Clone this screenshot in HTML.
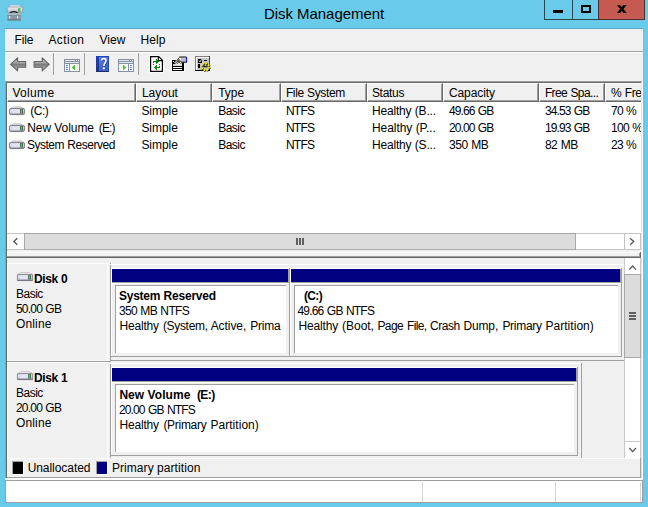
<!DOCTYPE html>
<html>
<head>
<meta charset="utf-8">
<title>Disk Management</title>
<style>
html,body{margin:0;padding:0;}
body{width:648px;height:507px;overflow:hidden;position:relative;background:#6ACAE9;font-family:"Liberation Sans",sans-serif;color:#000;}
.b{position:absolute;}
.t{position:absolute;white-space:pre;}
svg{position:absolute;overflow:visible;}
.hd{position:absolute;background:#F0F0F0;border-left:1px solid #fff;border-top:1px solid #fff;border-right:1px solid #696969;border-bottom:1px solid #696969;box-sizing:border-box;height:19px;}
.hd:after{content:"";position:absolute;right:0;bottom:0;left:0;top:0;border-right:1px solid #A0A0A0;border-bottom:1px solid #A0A0A0;}
.box{position:absolute;background:#fff;border:1px solid #A0A0A0;box-sizing:border-box;}
</style>
</head>
<body>
<!-- window frame inner line -->
<div class="b" style="left:4px;top:28px;width:640px;height:476px;background:#62C9EC;"></div>
<div class="b" style="left:5px;top:28px;width:638px;height:1px;background:#5CA8CC;"></div>
<!-- client -->
<div class="b" style="left:5px;top:29px;width:638px;height:474px;background:#F0F0F0;"></div>

<!-- caption buttons -->
<div class="b" style="left:544px;top:0;width:54px;height:20px;background:#29454F;"></div>
<div class="b" style="left:545px;top:0;width:27px;height:19px;background:#6ACAE9;"></div>
<div class="b" style="left:573px;top:0;width:25px;height:19px;background:#6ACAE9;"></div>
<div class="b" style="left:598px;top:0;width:47px;height:20px;background:#50302C;"></div>
<div class="b" style="left:599px;top:0;width:45px;height:19px;background:#C45A50;"></div>
<div class="b" style="left:553px;top:10px;width:10px;height:3px;background:#000;"></div>
<div class="b" style="left:581px;top:5px;width:10px;height:8px;border:2px solid #000;border-top-width:2px;box-sizing:border-box;"></div>
<svg style="left:616.8px;top:5px" width="9.6" height="8" viewBox="0 0 10 8" preserveAspectRatio="none"><path d="M0 0 L3.3 0 L5 2.3 L6.7 0 L10 0 L6.7 4 L10 8 L6.7 8 L5 5.7 L3.3 8 L0 8 L3.3 4 Z" fill="#000"/></svg>

<!-- title icon -->
<svg style="left:7px;top:5px" width="16" height="16" viewBox="0 0 16 16">
<defs>
<linearGradient id="gt1" x1="0" y1="0" x2="0" y2="1"><stop offset="0" stop-color="#ECECF0"/><stop offset="0.5" stop-color="#D4D4DE"/><stop offset="1" stop-color="#A9A9B6"/></linearGradient>
<linearGradient id="gt2" x1="0" y1="0" x2="0" y2="1"><stop offset="0" stop-color="#A9B8C0"/><stop offset="0.25" stop-color="#7F8E96"/><stop offset="0.55" stop-color="#8E9DA5"/><stop offset="1" stop-color="#66747C"/></linearGradient>
</defs>
<path d="M4 0.3 L12 0.3 L14.4 2.2 L1.6 2.2 Z" fill="#EDEDED" stroke="#B8BCC4" stroke-width="0.5"/>
<rect x="0.3" y="2" width="15.4" height="6" rx="1.6" fill="url(#gt1)" stroke="#8C8C9A" stroke-width="0.6"/>
<rect x="11.6" y="3" width="1.7" height="4.2" fill="#2ED62E"/>
<rect x="11.1" y="3.4" width="0.6" height="3.4" fill="#4C7A4C"/>
<path d="M2.8 7.9 Q6.8 5.2 10.8 7.9" fill="none" stroke="#1A1A1A" stroke-width="1.2"/>
<rect x="0.3" y="8.6" width="13.6" height="7" fill="url(#gt2)"/>
<rect x="0.3" y="8.6" width="13.6" height="1" fill="#B4C2CA"/>
<rect x="2.2" y="11" width="1" height="2.6" fill="#F4F4F4"/>
<rect x="10.2" y="11" width="1" height="2.6" fill="#F4F4F4"/>
</svg>

<!-- menu / toolbar separators -->
<div class="b" style="left:5px;top:51px;width:638px;height:1px;background:#A0A0A0;"></div>
<div class="b" style="left:5px;top:52px;width:638px;height:1px;background:#fff;"></div>

<!-- toolbar separators -->
<div class="b" style="left:53px;top:53px;width:1px;height:22px;background:#A0A0A0;"></div>
<div class="b" style="left:84px;top:53px;width:1px;height:22px;background:#A0A0A0;"></div>
<div class="b" style="left:138px;top:53px;width:1px;height:22px;background:#A0A0A0;"></div>

<!-- toolbar icons -->
<svg style="left:10px;top:57px" width="17" height="15" viewBox="0 0 17 15">
<defs><linearGradient id="ga" x1="0" y1="0" x2="0" y2="1"><stop offset="0" stop-color="#BCBCBC"/><stop offset="0.38" stop-color="#A6A6A6"/><stop offset="0.5" stop-color="#7A7A7A"/><stop offset="0.66" stop-color="#929292"/><stop offset="1" stop-color="#B8B8B8"/></linearGradient></defs>
<path d="M0.6 7.3 L7.6 0.8 L7.6 4.5 L15.7 4.5 L15.7 10.2 L7.6 10.2 L7.6 13.9 Z" fill="url(#ga)" stroke="#646464" stroke-width="1.1" stroke-linejoin="round"/>
</svg>
<svg style="left:33px;top:57px" width="17" height="15" viewBox="0 0 17 15">
<path d="M16.2 7.3 L9.2 0.8 L9.2 4.5 L1.1 4.5 L1.1 10.2 L9.2 10.2 L9.2 13.9 Z" fill="url(#ga)" stroke="#646464" stroke-width="1.1" stroke-linejoin="round"/>
</svg>
<!-- show/hide console tree -->
<svg style="left:64px;top:59px" width="16" height="13" viewBox="0 0 16 13" shape-rendering="crispEdges">
<rect x="0" y="0" width="16" height="13" fill="#8691A3"/>
<rect x="1" y="1" width="10" height="1" fill="#E4E8EE"/><rect x="12" y="1" width="1" height="1" fill="#fff"/><rect x="14" y="1" width="1" height="1" fill="#fff"/>
<rect x="1" y="3" width="14" height="1" fill="#E4E8EE"/>
<rect x="1" y="5" width="4" height="7" fill="#fff"/>
<rect x="6" y="5" width="9" height="7" fill="#fff"/><rect x="12" y="5" width="3" height="7" fill="#F2F2F2"/>
<rect x="2" y="6" width="2" height="1" fill="#4E86D2"/><rect x="2" y="8" width="2" height="1" fill="#4E86D2"/><rect x="2" y="10" width="2" height="1" fill="#4E86D2"/>
<path d="M11 5.6 L11 11.4 L7.7 8.5 Z" fill="#4BBE36" shape-rendering="auto"/>
</svg>
<!-- help -->
<svg style="left:96px;top:56px" width="13" height="16" viewBox="0 0 13 16">
<defs><linearGradient id="gh" x1="0" y1="0" x2="0.3" y2="1"><stop offset="0" stop-color="#5C82E0"/><stop offset="1" stop-color="#3C60CC"/></linearGradient>
<linearGradient id="gh2" x1="0" y1="0" x2="0" y2="1"><stop offset="0" stop-color="#1D40BC"/><stop offset="1" stop-color="#22357C"/></linearGradient></defs>
<rect x="0" y="0" width="13" height="16" fill="url(#gh)"/>
<rect x="0" y="0" width="3" height="16" fill="url(#gh2)"/>
<rect x="0" y="0" width="13" height="1" fill="#1E40BA"/>
<rect x="12" y="0" width="1" height="16" fill="#2648BC"/>
<rect x="0" y="15" width="13" height="1" fill="#1E2E70"/>
<path d="M5.6 4.6 C5.6 1.9 10.1 1.9 10.1 4.8 C10.1 6.9 7.9 7.2 7.9 10" stroke="#1C2C70" stroke-width="1.6" fill="none" transform="translate(0.6,0.6)"/>
<path d="M5.6 4.6 C5.6 1.9 10.1 1.9 10.1 4.8 C10.1 6.9 7.9 7.2 7.9 10" stroke="#fff" stroke-width="1.6" fill="none"/>
<rect x="7.3" y="11.8" width="2" height="2" fill="#1C2C70"/>
<rect x="6.9" y="11.4" width="2" height="2" fill="#fff"/>
</svg>
<!-- action pane -->
<svg style="left:118px;top:59px" width="16" height="13" viewBox="0 0 16 13" shape-rendering="crispEdges">
<rect x="0" y="0" width="16" height="13" fill="#8691A3"/>
<rect x="1" y="1" width="10" height="1" fill="#E4E8EE"/><rect x="12" y="1" width="1" height="1" fill="#fff"/><rect x="14" y="1" width="1" height="1" fill="#fff"/>
<rect x="1" y="3" width="14" height="1" fill="#E4E8EE"/>
<rect x="1" y="5" width="9" height="7" fill="#fff"/><rect x="1" y="5" width="3" height="7" fill="#F2F2F2"/>
<rect x="11" y="5" width="4" height="7" fill="#fff"/>
<rect x="12" y="6" width="2" height="1" fill="#4E86D2"/><rect x="12" y="8" width="2" height="1" fill="#4E86D2"/><rect x="12" y="10" width="2" height="1" fill="#4E86D2"/>
<path d="M5 5.6 L5 11.4 L8.3 8.5 Z" fill="#4BBE36" shape-rendering="auto"/>
</svg>
<!-- refresh -->
<svg style="left:150px;top:56px" width="13" height="16" viewBox="0 0 13 16">
<path d="M-0.6 -0.6 L9.2 -0.6 L13.6 3.8 L13.6 16.6 L-0.6 16.6 Z" fill="#fff"/>
<path d="M0.6 0.6 L8.7 0.6 L12.4 4.3 L12.4 15.4 L0.6 15.4 Z" fill="#fff" stroke="#000" stroke-width="1.2"/>
<path d="M8.3 0.8 L8.3 4.6 L12.2 4.6" fill="none" stroke="#000" stroke-width="1.1"/>
<g fill="#0A8A0A" shape-rendering="crispEdges">
<rect x="3" y="5" width="4" height="1"/><rect x="3" y="6" width="1" height="1"/><rect x="3" y="8" width="1" height="1"/>
<rect x="6" y="3" width="1" height="5"/><rect x="7" y="4" width="1" height="3"/><rect x="8" y="5" width="1" height="1"/>
<rect x="6" y="11" width="4" height="1"/><rect x="9" y="10" width="1" height="1"/><rect x="9" y="8" width="1" height="1"/>
<rect x="6" y="9" width="1" height="5"/><rect x="5" y="10" width="1" height="3"/><rect x="4" y="11" width="1" height="1"/>
</g>
</svg>
<!-- properties -->
<svg style="left:172px;top:56px" width="16" height="16" viewBox="0 0 16 16">
<rect x="-0.7" y="3.3" width="13.4" height="12.4" fill="#fff"/>
<rect x="0" y="4" width="12" height="11" fill="#000"/>
<rect x="1" y="5" width="1" height="1" fill="#fff"/>
<rect x="1" y="8" width="9" height="2" fill="#D4D4D4"/><rect x="1" y="11" width="9" height="1" fill="#fff"/><rect x="1" y="13" width="9" height="1" fill="#fff"/>
<path d="M2 6.8 L7 0.6 L14 0.6 L14 6.6 L10.6 6.6 L8.6 8.8 L5.4 8.8 Z" fill="#fff"/>
<path d="M2.6 6.6 L7.4 1.2 L9.2 1.2 L9.2 6 L7.6 8.2 L5.6 8.2 Z" fill="#E8E8E8"/>
<rect x="9" y="1.4" width="5" height="4.6" fill="#BEBEBE"/>
<path d="M7.2 1 L14 1 M9 6.2 L14 6.2" stroke="#000" stroke-width="1" fill="none"/>
<path d="M2.8 6.8 L7.4 1.4 M4 7.4 L7 3.8 M5.6 4.4 L8.6 7.6 M6.6 3.2 L9.2 6 M5.2 7.8 L7.8 4.8" stroke="#1A1A1A" stroke-width="0.8" fill="none"/>
<rect x="14.1" y="0.8" width="1" height="6" fill="#0000C8"/>
</svg>
<!-- wizard / settings -->
<svg style="left:195px;top:56px" width="17" height="16" viewBox="0 0 17 16">
<rect x="0" y="0" width="15" height="15" fill="#808080"/>
<rect x="1" y="1" width="14" height="14" fill="#fff"/>
<rect x="2" y="2" width="13" height="13" fill="#C4C4C4"/>
<rect x="14" y="0" width="1" height="15" fill="#404040"/>
<rect x="0" y="14" width="15" height="1" fill="#000"/>
<rect x="3" y="3" width="4" height="4" fill="#000"/><path d="M4 4.6 L5 5.8 L6.6 3.4" stroke="#fff" stroke-width="0.9" fill="none"/>
<rect x="9" y="4" width="3" height="1" fill="#000"/>
<rect x="3" y="8" width="2" height="4" fill="#000"/>
<path d="M9 7.4 L9 10.6 L12 10.6 L12 7.4" stroke="#202020" stroke-width="1.2" fill="none"/>
<circle cx="14.43" cy="12.33" r="1.1" fill="#000"/>
<circle cx="12.63" cy="14.40" r="1.1" fill="#000"/>
<circle cx="9.81" cy="14.64" r="1.1" fill="#000"/>
<circle cx="7.63" cy="12.93" r="1.1" fill="#000"/>
<circle cx="7.37" cy="10.27" r="1.1" fill="#000"/>
<circle cx="9.17" cy="8.20" r="1.1" fill="#000"/>
<circle cx="11.99" cy="7.96" r="1.1" fill="#000"/>
<circle cx="14.17" cy="9.67" r="1.1" fill="#000"/>
<circle cx="13.93" cy="11.83" r="1.05" fill="#F0F000"/>
<circle cx="12.13" cy="13.90" r="1.05" fill="#F0F000"/>
<circle cx="9.31" cy="14.14" r="1.05" fill="#F0F000"/>
<circle cx="7.13" cy="12.43" r="1.05" fill="#F0F000"/>
<circle cx="6.87" cy="9.77" r="1.05" fill="#F0F000"/>
<circle cx="8.67" cy="7.70" r="1.05" fill="#F0F000"/>
<circle cx="11.49" cy="7.46" r="1.05" fill="#F0F000"/>
<circle cx="13.67" cy="9.17" r="1.05" fill="#F0F000"/>
</svg>

<!-- ===== volume list ===== -->
<div class="b" style="left:5px;top:81px;width:638px;height:171px;background:#fff;"></div>
<div class="b" style="left:5px;top:81px;width:637px;height:1px;background:#A0A0A0;"></div>
<div class="b" style="left:5px;top:81px;width:1px;height:397px;background:#A0A0A0;"></div>
<div class="b" style="left:6px;top:82px;width:635px;height:1px;background:#696969;"></div>
<div class="b" style="left:6px;top:82px;width:1px;height:396px;background:#696969;"></div>
<div class="b" style="left:641px;top:82px;width:1px;height:169px;background:#E3E3E3;"></div>
<!-- header -->
<div class="b" style="left:7px;top:83px;width:634px;height:19px;overflow:hidden;">
<div class="hd" style="left:0px;top:0;width:129px;"></div>
<div class="hd" style="left:129px;top:0;width:76px;"></div>
<div class="hd" style="left:205px;top:0;width:69px;"></div>
<div class="hd" style="left:274px;top:0;width:86px;"></div>
<div class="hd" style="left:360px;top:0;width:76px;"></div>
<div class="hd" style="left:436px;top:0;width:96px;"></div>
<div class="hd" style="left:532px;top:0;width:66px;"></div>
<div class="hd" style="left:598px;top:0;width:60px;"></div>
</div>
<!-- drive icons -->
<svg width="0" height="0" style="left:0;top:0"><defs>
<linearGradient id="gd" x1="0" y1="0" x2="0" y2="1"><stop offset="0" stop-color="#C6C6D0"/><stop offset="0.45" stop-color="#E2E2EE"/><stop offset="1" stop-color="#9E9EAC"/></linearGradient>

</defs></svg>
<svg style="left:9px;top:106px" width="16" height="9" viewBox="0 0 16 9"><path d="M4.2 0.4 L11.8 0.4 L13.6 2.3 L2.4 2.3 Z" fill="#E8E8E8" stroke="#C4C4CA" stroke-width="0.5"/>
<rect x="0.4" y="2.3" width="15.2" height="6.3" rx="1.9" fill="url(#gd)" stroke="#6C6C76" stroke-width="0.9"/>
<rect x="2.6" y="3.5" width="8.4" height="3.4" fill="#E4E4F2"/>
<rect x="11.1" y="3.1" width="3" height="4.4" rx="0.6" fill="#4A4A56"/>
<rect x="11.8" y="3.3" width="1.5" height="4" fill="#30E030"/></svg>
<svg style="left:9px;top:123px" width="16" height="9" viewBox="0 0 16 9"><path d="M4.2 0.4 L11.8 0.4 L13.6 2.3 L2.4 2.3 Z" fill="#E8E8E8" stroke="#C4C4CA" stroke-width="0.5"/>
<rect x="0.4" y="2.3" width="15.2" height="6.3" rx="1.9" fill="url(#gd)" stroke="#6C6C76" stroke-width="0.9"/>
<rect x="2.6" y="3.5" width="8.4" height="3.4" fill="#E4E4F2"/>
<rect x="11.1" y="3.1" width="3" height="4.4" rx="0.6" fill="#4A4A56"/>
<rect x="11.8" y="3.3" width="1.5" height="4" fill="#30E030"/></svg>
<svg style="left:9px;top:140px" width="16" height="9" viewBox="0 0 16 9"><path d="M4.2 0.4 L11.8 0.4 L13.6 2.3 L2.4 2.3 Z" fill="#E8E8E8" stroke="#C4C4CA" stroke-width="0.5"/>
<rect x="0.4" y="2.3" width="15.2" height="6.3" rx="1.9" fill="url(#gd)" stroke="#6C6C76" stroke-width="0.9"/>
<rect x="2.6" y="3.5" width="8.4" height="3.4" fill="#E4E4F2"/>
<rect x="11.1" y="3.1" width="3" height="4.4" rx="0.6" fill="#4A4A56"/>
<rect x="11.8" y="3.3" width="1.5" height="4" fill="#30E030"/></svg>
<!-- list h-scrollbar -->
<div class="b" style="left:7px;top:233px;width:634px;height:17px;background:#fff;"></div>
<div class="b" style="left:7px;top:233px;width:634px;height:1px;background:#C4C4C4;"></div>
<div class="b" style="left:7px;top:249px;width:634px;height:1px;background:#C4C4C4;"></div>
<div class="b" style="left:24px;top:233px;width:552px;height:17px;background:#A9A9A9;"></div>
<div class="b" style="left:25px;top:234px;width:550px;height:15px;background:#DCDCDC;"></div>
<div class="b" style="left:624px;top:233px;width:1px;height:17px;background:#C4C4C4;"></div>
<div class="b" style="left:640px;top:233px;width:1px;height:17px;background:#C4C4C4;"></div>
<svg style="left:11px;top:237px" width="8" height="10" viewBox="0 0 8 10"><path d="M6.3 1.2 L2.8 4.5 L6.3 7.8" fill="none" stroke="#555" stroke-width="1.3"/></svg>
<svg style="left:628px;top:237px" width="8" height="10" viewBox="0 0 8 10"><path d="M2.2 1.2 L5.7 4.5 L2.2 7.8" fill="none" stroke="#555" stroke-width="1.3"/></svg>
<div class="b" style="left:296px;top:238px;width:2px;height:7px;background:#606060;"></div>
<div class="b" style="left:299px;top:238px;width:2px;height:7px;background:#606060;"></div>
<div class="b" style="left:302px;top:238px;width:2px;height:7px;background:#606060;"></div>

<!-- splitter -->
<div class="b" style="left:7px;top:250px;width:634px;height:8px;background:#F2F2F2;"></div>
<div class="b" style="left:7px;top:252px;width:633px;height:1px;background:#fff;"></div>
<div class="b" style="left:7px;top:252px;width:1px;height:5px;background:#fff;"></div>
<div class="b" style="left:639px;top:253px;width:1px;height:4px;background:#A0A0A0;"></div>
<div class="b" style="left:640px;top:252px;width:1px;height:6px;background:#696969;"></div>
<div class="b" style="left:641px;top:250px;width:2px;height:8px;background:#fff;"></div>

<!-- ===== lower pane ===== -->
<div class="b" style="left:5px;top:256px;width:638px;height:223px;background:#F0F0F0;"></div>
<div class="b" style="left:7px;top:256px;width:633px;height:1px;background:#A0A0A0;"></div>
<div class="b" style="left:5px;top:256px;width:1px;height:222px;background:#A0A0A0;"></div>
<div class="b" style="left:7px;top:257px;width:634px;height:1px;background:#696969;"></div>
<div class="b" style="left:6px;top:256px;width:1px;height:222px;background:#696969;"></div>
<div class="b" style="left:641px;top:258px;width:1px;height:220px;background:#E3E3E3;"></div>
<div class="b" style="left:640px;top:256px;width:1px;height:2px;background:#696969;"></div>
<div class="b" style="left:641px;top:256px;width:1px;height:2px;background:#fff;"></div>
<div class="b" style="left:642px;top:256px;width:1px;height:223px;background:#fff;"></div>
<div class="b" style="left:7px;top:477px;width:634px;height:1px;background:#A0A0A0;"></div>
<div class="b" style="left:5px;top:478px;width:638px;height:2px;background:#fff;"></div>

<!-- disk 0 label -->
<div class="b" style="left:7px;top:258px;width:1px;height:219px;background:#fff;"></div>
<div class="b" style="left:8px;top:360px;width:100px;height:1px;background:#F8F8F8;"></div>
<div class="b" style="left:7px;top:263px;width:101px;height:1px;background:#fff;"></div>
<div class="b" style="left:107px;top:263px;width:1px;height:98px;background:#fff;"></div>
<div class="b" style="left:110px;top:263px;width:1px;height:1px;background:#A0A0A0;"></div>
<div class="b" style="left:110px;top:265px;width:1px;height:96px;background:#A0A0A0;"></div>
<div class="b" style="left:7px;top:361px;width:104px;height:1px;background:#A0A0A0;"></div>
<svg style="left:17px;top:272px" width="16" height="9" viewBox="0 0 16 9"><path d="M3.6 0.5 L12.4 0.5 L14.4 2.4 L1.6 2.4 Z" fill="#F4F4F4" stroke="#BEBEC4" stroke-width="0.7"/>
<rect x="0.4" y="2.4" width="15.2" height="6.2" rx="0.5" fill="url(#gd)" stroke="#7A7A84" stroke-width="0.8"/>
<rect x="2.6" y="3.5" width="8.4" height="3.4" fill="#E6E6F4"/>
<rect x="11.1" y="3.1" width="3" height="4.4" rx="0.6" fill="#50505C"/>
<rect x="11.8" y="3.3" width="1.5" height="4" fill="#34E034"/>
<rect x="0.4" y="8" width="15.2" height="0.8" fill="#74747E"/></svg>
<!-- disk 0 partitions -->
<div class="b" style="left:111px;top:264px;width:513px;height:1px;background:#fff;"></div>
<div class="b" style="left:111px;top:268px;width:179px;height:89px;background:#A0A0A0;"></div>
<div class="b" style="left:111px;top:268px;width:178px;height:88px;background:#fff;"></div>
<div class="b" style="left:112px;top:269px;width:177px;height:14px;background:#A0A0A0;"></div>
<div class="b" style="left:112px;top:269px;width:176px;height:13px;background:#000080;"></div>
<div class="b" style="left:112px;top:284px;width:177px;height:72px;background:#F0F0F0;"></div>
<div class="b" style="left:115px;top:285px;width:171px;height:68px;background:#A0A0A0;"></div>
<div class="b" style="left:116px;top:286px;width:170px;height:67px;background:#fff;"></div>
<div class="b" style="left:290px;top:268px;width:332px;height:89px;background:#A0A0A0;"></div>
<div class="b" style="left:290px;top:268px;width:331px;height:88px;background:#fff;"></div>
<div class="b" style="left:291px;top:269px;width:330px;height:14px;background:#A0A0A0;"></div>
<div class="b" style="left:291px;top:269px;width:329px;height:13px;background:#000080;"></div>
<div class="b" style="left:291px;top:284px;width:330px;height:72px;background:#F0F0F0;"></div>
<div class="b" style="left:294px;top:285px;width:324px;height:68px;background:#A0A0A0;"></div>
<div class="b" style="left:295px;top:286px;width:323px;height:67px;background:#fff;"></div>
<div class="b" style="left:111px;top:360px;width:513px;height:1px;background:#A0A0A0;"></div>

<!-- disk 1 label -->
<div class="b" style="left:7px;top:362px;width:101px;height:1px;background:#fff;"></div>
<div class="b" style="left:107px;top:362px;width:1px;height:96px;background:#fff;"></div>
<div class="b" style="left:110px;top:364px;width:1px;height:94px;background:#A0A0A0;"></div>
<svg style="left:17px;top:371px" width="16" height="9" viewBox="0 0 16 9"><path d="M3.6 0.5 L12.4 0.5 L14.4 2.4 L1.6 2.4 Z" fill="#F4F4F4" stroke="#BEBEC4" stroke-width="0.7"/>
<rect x="0.4" y="2.4" width="15.2" height="6.2" rx="0.5" fill="url(#gd)" stroke="#7A7A84" stroke-width="0.8"/>
<rect x="2.6" y="3.5" width="8.4" height="3.4" fill="#E6E6F4"/>
<rect x="11.1" y="3.1" width="3" height="4.4" rx="0.6" fill="#50505C"/>
<rect x="11.8" y="3.3" width="1.5" height="4" fill="#34E034"/>
<rect x="0.4" y="8" width="15.2" height="0.8" fill="#74747E"/></svg>
<!-- disk 1 partitions -->
<div class="b" style="left:111px;top:363px;width:471px;height:1px;background:#fff;"></div>
<div class="b" style="left:111px;top:367px;width:467px;height:89px;background:#A0A0A0;"></div>
<div class="b" style="left:111px;top:367px;width:466px;height:88px;background:#fff;"></div>
<div class="b" style="left:112px;top:368px;width:465px;height:14px;background:#A0A0A0;"></div>
<div class="b" style="left:112px;top:368px;width:464px;height:13px;background:#000080;"></div>
<div class="b" style="left:112px;top:383px;width:465px;height:72px;background:#F0F0F0;"></div>
<div class="b" style="left:115px;top:384px;width:459px;height:68px;background:#A0A0A0;"></div>
<div class="b" style="left:116px;top:385px;width:458px;height:67px;background:#fff;"></div>
<div class="b" style="left:581px;top:363px;width:1px;height:95px;background:#A0A0A0;"></div>

<!-- v scrollbar -->
<div class="b" style="left:624px;top:258px;width:17px;height:200px;background:#C8C8C8;"></div>
<div class="b" style="left:625px;top:258px;width:15px;height:16px;background:#fff;"></div>
<div class="b" style="left:624px;top:274px;width:17px;height:84px;background:#A9A9A9;"></div>
<div class="b" style="left:625px;top:275px;width:15px;height:82px;background:#DCDCDC;"></div>
<div class="b" style="left:625px;top:358px;width:15px;height:83px;background:#fff;"></div>
<div class="b" style="left:625px;top:442px;width:15px;height:16px;background:#fff;"></div>
<svg style="left:628px;top:264px" width="10" height="8" viewBox="0 0 10 8"><path d="M1.3 5.6 L4.65 2 L8 5.6" fill="none" stroke="#555" stroke-width="1.3"/></svg>
<svg style="left:628px;top:446px" width="10" height="8" viewBox="0 0 10 8"><path d="M1.3 2 L4.65 5.6 L8 2" fill="none" stroke="#555" stroke-width="1.3"/></svg>
<div class="b" style="left:629px;top:312px;width:7px;height:2px;background:#606060;"></div>
<div class="b" style="left:629px;top:315px;width:7px;height:2px;background:#606060;"></div>
<div class="b" style="left:629px;top:318px;width:7px;height:2px;background:#606060;"></div>

<!-- legend -->
<div class="b" style="left:7px;top:458px;width:634px;height:1px;background:#fff;"></div>
<div class="b" style="left:7px;top:459px;width:634px;height:18px;background:#F0F0F0;"></div>
<div class="b" style="left:640px;top:458px;width:1px;height:20px;background:#A0A0A0;"></div>
<div class="b" style="left:12px;top:461px;width:12px;height:14px;background:#fff;"></div>
<div class="b" style="left:12px;top:461px;width:11px;height:13px;background:#A0A0A0;"></div>
<div class="b" style="left:13px;top:462px;width:10px;height:12px;background:#000;"></div>
<div class="b" style="left:96px;top:461px;width:12px;height:14px;background:#fff;"></div>
<div class="b" style="left:96px;top:461px;width:11px;height:13px;background:#A0A0A0;"></div>
<div class="b" style="left:97px;top:462px;width:10px;height:12px;background:#000080;"></div>

<!-- status bar -->
<div class="b" style="left:5px;top:480px;width:638px;height:23px;background:#A0A0A0;"></div>
<div class="b" style="left:6px;top:481px;width:636px;height:21px;background:#fff;"></div>
<div class="b" style="left:422px;top:482px;width:1px;height:20px;background:#D4D4D4;"></div>
<div class="b" style="left:555px;top:482px;width:1px;height:20px;background:#D4D4D4;"></div>
<div class="b" style="left:640px;top:482px;width:1px;height:20px;background:#D8D8D8;"></div>

<!-- text -->

<span class="t" style="left:263.90px;top:4.30px;font-size:15px;line-height:19px;letter-spacing:-0.046px;word-spacing:0.046px;">Disk Management</span>
<span class="t" style="left:14.40px;top:31.84px;font-size:12px;line-height:16px;letter-spacing:-0.086px;">File</span>
<span class="t" style="left:48.40px;top:31.84px;font-size:12px;line-height:16px;letter-spacing:0.440px;">Action</span>
<span class="t" style="left:99.40px;top:31.84px;font-size:12px;line-height:16px;letter-spacing:0.051px;">View</span>
<span class="t" style="left:140.40px;top:31.84px;font-size:12px;line-height:16px;letter-spacing:0.078px;">Help</span>
<span class="t" style="left:12.40px;top:84.84px;font-size:12px;line-height:16px;letter-spacing:0.328px;">Volume</span>
<span class="t" style="left:141.90px;top:84.84px;font-size:12px;line-height:16px;letter-spacing:-0.005px;">Layout</span>
<span class="t" style="left:218.15px;top:84.84px;font-size:12px;line-height:16px;letter-spacing:-0.004px;">Type</span>
<span class="t" style="left:285.90px;top:84.84px;font-size:12px;line-height:16px;letter-spacing:-0.369px;word-spacing:0.369px;">File System</span>
<span class="t" style="left:371.90px;top:84.84px;font-size:12px;line-height:16px;letter-spacing:-0.297px;">Status</span>
<span class="t" style="left:448.90px;top:84.84px;font-size:12px;line-height:16px;letter-spacing:-0.086px;">Capacity</span>
<span class="t" style="left:544.90px;top:84.84px;font-size:12px;line-height:16px;letter-spacing:-0.608px;word-spacing:0.608px;">Free Spa...</span>
<span class="t" style="left:611.00px;top:84.84px;font-size:12px;line-height:16px;letter-spacing:-0.354px;word-spacing:0.354px;width:30.00px;overflow:hidden;">% Fre</span>
<span class="t" style="left:30.20px;top:102.84px;font-size:12px;line-height:16px;letter-spacing:-0.450px;">(C:)</span>
<span class="t" style="left:141.40px;top:102.84px;font-size:12px;line-height:16px;letter-spacing:-0.031px;">Simple</span>
<span class="t" style="left:218.15px;top:102.84px;font-size:12px;line-height:16px;letter-spacing:-0.519px;">Basic</span>
<span class="t" style="left:285.90px;top:102.84px;font-size:12px;line-height:16px;letter-spacing:-0.711px;">NTFS</span>
<span class="t" style="left:371.90px;top:102.84px;font-size:12px;line-height:16px;letter-spacing:-0.169px;word-spacing:0.169px;">Healthy (B...</span>
<span class="t" style="left:448.90px;top:102.84px;font-size:12px;line-height:16px;letter-spacing:-0.886px;word-spacing:0.886px;">49.66 GB</span>
<span class="t" style="left:544.90px;top:102.84px;font-size:12px;line-height:16px;letter-spacing:-0.886px;word-spacing:0.886px;">34.53 GB</span>
<span class="t" style="left:611.00px;top:102.84px;font-size:12px;line-height:16px;letter-spacing:-0.786px;word-spacing:0.786px;width:30.00px;overflow:hidden;">70 %</span>
<span class="t" style="left:27.20px;top:119.84px;font-size:12px;line-height:16px;letter-spacing:-0.064px;word-spacing:0.064px;">New Volume</span>
<span class="t" style="left:98.80px;top:119.84px;font-size:12px;line-height:16px;letter-spacing:-0.861px;">(E:)</span>
<span class="t" style="left:141.40px;top:119.84px;font-size:12px;line-height:16px;letter-spacing:-0.031px;">Simple</span>
<span class="t" style="left:218.15px;top:119.84px;font-size:12px;line-height:16px;letter-spacing:-0.519px;">Basic</span>
<span class="t" style="left:285.90px;top:119.84px;font-size:12px;line-height:16px;letter-spacing:-0.711px;">NTFS</span>
<span class="t" style="left:371.90px;top:119.84px;font-size:12px;line-height:16px;letter-spacing:-0.040px;word-spacing:0.040px;">Healthy (P...</span>
<span class="t" style="left:448.90px;top:119.84px;font-size:12px;line-height:16px;letter-spacing:-0.886px;word-spacing:0.886px;">20.00 GB</span>
<span class="t" style="left:544.90px;top:119.84px;font-size:12px;line-height:16px;letter-spacing:-0.886px;word-spacing:0.886px;">19.93 GB</span>
<span class="t" style="left:611.00px;top:119.84px;font-size:12px;line-height:16px;letter-spacing:-0.708px;word-spacing:0.708px;width:30.00px;overflow:hidden;">100 %</span>
<span class="t" style="left:26.90px;top:136.84px;font-size:12px;line-height:16px;letter-spacing:-0.479px;word-spacing:0.479px;">System Reserved</span>
<span class="t" style="left:141.40px;top:136.84px;font-size:12px;line-height:16px;letter-spacing:-0.031px;">Simple</span>
<span class="t" style="left:218.15px;top:136.84px;font-size:12px;line-height:16px;letter-spacing:-0.519px;">Basic</span>
<span class="t" style="left:285.90px;top:136.84px;font-size:12px;line-height:16px;letter-spacing:-0.711px;">NTFS</span>
<span class="t" style="left:371.90px;top:136.84px;font-size:12px;line-height:16px;letter-spacing:-0.169px;word-spacing:0.169px;">Healthy (S...</span>
<span class="t" style="left:448.90px;top:136.84px;font-size:12px;line-height:16px;letter-spacing:-0.372px;word-spacing:0.372px;">350 MB</span>
<span class="t" style="left:544.90px;top:136.84px;font-size:12px;line-height:16px;letter-spacing:-0.447px;word-spacing:0.447px;">82 MB</span>
<span class="t" style="left:611.00px;top:136.84px;font-size:12px;line-height:16px;letter-spacing:-0.786px;word-spacing:0.786px;width:30.00px;overflow:hidden;">23 %</span>
<span class="t" style="left:33.90px;top:270.84px;font-size:12px;line-height:16px;letter-spacing:-0.372px;word-spacing:0.372px;font-weight:700;">Disk 0</span>
<span class="t" style="left:15.90px;top:285.84px;font-size:12px;line-height:16px;letter-spacing:-0.469px;">Basic</span>
<span class="t" style="left:15.90px;top:300.84px;font-size:12px;line-height:16px;letter-spacing:-0.779px;word-spacing:0.779px;">50.00 GB</span>
<span class="t" style="left:15.90px;top:315.84px;font-size:12px;line-height:16px;letter-spacing:0.177px;">Online</span>
<span class="t" style="left:33.90px;top:369.84px;font-size:12px;line-height:16px;letter-spacing:-0.372px;word-spacing:0.372px;font-weight:700;">Disk 1</span>
<span class="t" style="left:15.90px;top:384.84px;font-size:12px;line-height:16px;letter-spacing:-0.469px;">Basic</span>
<span class="t" style="left:15.90px;top:399.84px;font-size:12px;line-height:16px;letter-spacing:-0.779px;word-spacing:0.779px;">20.00 GB</span>
<span class="t" style="left:15.90px;top:414.84px;font-size:12px;line-height:16px;letter-spacing:0.177px;">Online</span>
<span class="t" style="left:118.90px;top:287.84px;font-size:12px;line-height:16px;letter-spacing:-0.219px;word-spacing:0.219px;font-weight:700;">System Reserved</span>
<span class="t" style="left:118.90px;top:302.84px;font-size:12px;line-height:16px;letter-spacing:-0.642px;word-spacing:0.642px;">350 MB NTFS</span>
<span class="t" style="left:119.60px;top:317.84px;font-size:12px;line-height:16px;letter-spacing:-0.198px;">Healthy</span>
<span class="t" style="left:162.90px;top:317.84px;font-size:12px;line-height:16px;letter-spacing:-0.318px;">(System,</span>
<span class="t" style="left:210.70px;top:317.84px;font-size:12px;line-height:16px;letter-spacing:-0.074px;">Active,</span>
<span class="t" style="left:250.20px;top:317.84px;font-size:12px;line-height:16px;letter-spacing:-0.229px;">Prima</span>
<span class="t" style="left:303.90px;top:287.84px;font-size:12px;line-height:16px;letter-spacing:-0.602px;font-weight:700;">(C:)</span>
<span class="t" style="left:297.40px;top:302.84px;font-size:12px;line-height:16px;letter-spacing:-0.784px;word-spacing:0.784px;">49.66 GB NTFS</span>
<span class="t" style="left:298.40px;top:317.84px;font-size:12px;line-height:16px;letter-spacing:-0.141px;">Healthy</span>
<span class="t" style="left:342.10px;top:317.84px;font-size:12px;line-height:16px;letter-spacing:-0.036px;">(Boot,</span>
<span class="t" style="left:377.40px;top:317.84px;font-size:12px;line-height:16px;letter-spacing:-0.583px;">Page</span>
<span class="t" style="left:407.10px;top:317.84px;font-size:12px;line-height:16px;letter-spacing:-0.674px;">File,</span>
<span class="t" style="left:430.10px;top:317.84px;font-size:12px;line-height:16px;letter-spacing:-0.483px;">Crash</span>
<span class="t" style="left:463.40px;top:317.84px;font-size:12px;line-height:16px;letter-spacing:-0.129px;">Dump,</span>
<span class="t" style="left:502.40px;top:317.84px;font-size:12px;line-height:16px;letter-spacing:-0.292px;">Primary</span>
<span class="t" style="left:545.40px;top:317.84px;font-size:12px;line-height:16px;letter-spacing:0.047px;">Partition)</span>
<span class="t" style="left:119.40px;top:386.84px;font-size:12px;line-height:16px;letter-spacing:0.059px;word-spacing:-0.059px;font-weight:700;">New Volume</span>
<span class="t" style="left:196.90px;top:386.84px;font-size:12px;line-height:16px;letter-spacing:-0.562px;font-weight:700;">(E:)</span>
<span class="t" style="left:118.90px;top:401.84px;font-size:12px;line-height:16px;letter-spacing:-0.852px;word-spacing:0.852px;">20.00 GB NTFS</span>
<span class="t" style="left:119.60px;top:416.84px;font-size:12px;line-height:16px;letter-spacing:-0.198px;">Healthy</span>
<span class="t" style="left:163.40px;top:416.84px;font-size:12px;line-height:16px;letter-spacing:-0.291px;">(Primary</span>
<span class="t" style="left:210.40px;top:416.84px;font-size:12px;line-height:16px;letter-spacing:0.047px;">Partition)</span>
<span class="t" style="left:27.65px;top:459.84px;font-size:12px;line-height:16px;letter-spacing:-0.057px;">Unallocated</span>
<span class="t" style="left:111.90px;top:459.84px;font-size:12px;line-height:16px;letter-spacing:0.071px;word-spacing:-0.071px;">Primary partition</span>
</body>
</html>
